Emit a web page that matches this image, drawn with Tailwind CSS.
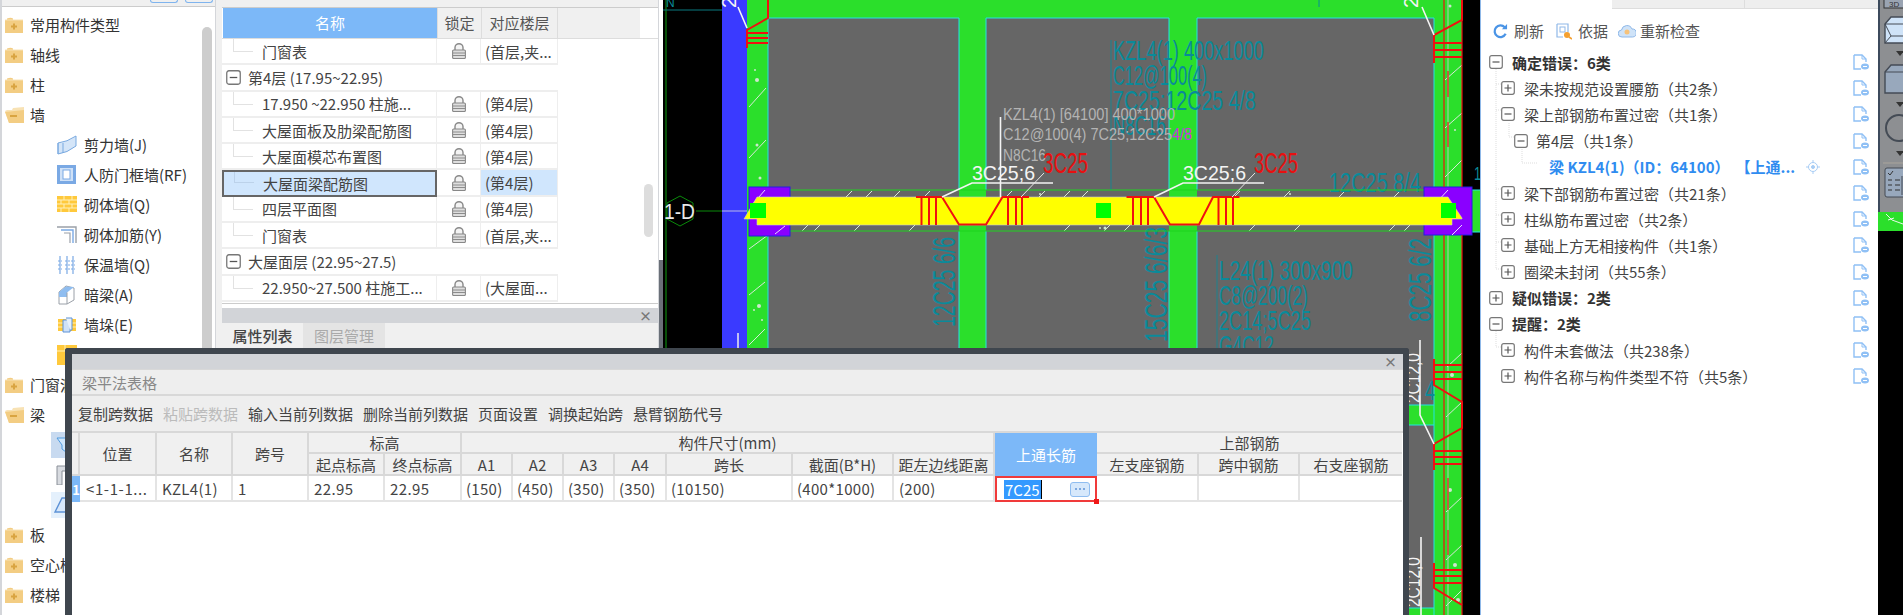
<!DOCTYPE html>
<html lang="zh-CN">
<head>
<meta charset="UTF-8">
<title>梁平法表格</title>
<script src="https://cdn.jsdelivr.net/npm/@tailwindcss/browser@4"></script>
</head>
<body class="bg-black overflow-hidden font-['Noto_Sans_CJK_SC','Noto_Sans',sans-serif] text-[15px] text-[#444]">

<svg class="hidden">
  <defs>
    <symbol id="folder-plus" viewBox="0 0 18 16">
      <path d="M0 3 L2 3 L2 1.5 Q6 0 8 1.5 L8 3 L18 3 L18 16 L0 16Z" fill="#f3cd83"/>
      <path d="M0 3 H18" stroke="#f8e2b4" stroke-width="1"/>
      <path d="M6 9.5H12M9 6.5V12.5" stroke="#d9a441" stroke-width="2"/>
    </symbol>
    <symbol id="folder-minus" viewBox="0 0 20 16">
      <path d="M2 3 L7 3 L8 1 L19 0 L19 16 L4 16 L0 4Z" fill="#f8e2b4"/>
      <path d="M0 5 L19 3 L19 16 L4 16Z" fill="#f3cd83"/>
      <path d="M5 9H12" stroke="#d9a441" stroke-width="2"/>
    </symbol>
    <symbol id="lock" viewBox="0 0 14 16">
      <path d="M3 7V4.500a4 3.800 0 0 1 8 0V7" fill="#f4f4f4" stroke="#888" stroke-width="1.4"/>
      <rect x="0.600" y="7" width="12.800" height="8.500" rx="1" fill="#dedede" stroke="#888" stroke-width="1.100"/>
      <path d="M1 10H13M1 12.500H13" stroke="#8c8c8c" stroke-width="1.100"/>
    </symbol>
    <symbol id="box-plus" viewBox="0 0 14 14">
      <rect x="0.7" y="0.7" width="12.6" height="12.6" rx="2" fill="#fff" stroke="#777" stroke-width="1.2"/>
      <path d="M3.5 7H10.5M7 3.5V10.5" stroke="#555" stroke-width="1.2"/>
    </symbol>
    <symbol id="box-minus" viewBox="0 0 14 14">
      <rect x="0.7" y="0.7" width="12.6" height="12.6" rx="2" fill="#fff" stroke="#777" stroke-width="1.2"/>
      <path d="M3.5 7H10.5" stroke="#555" stroke-width="1.2"/>
    </symbol>
    <symbol id="doc" viewBox="0 0 16 16">
      <path d="M1 1H9L13 5V8M1 1V15H8" fill="none" stroke="#8fc0f5" stroke-width="1.4"/>
      <path d="M9 1V5H13" fill="none" stroke="#8fc0f5" stroke-width="1"/>
      <ellipse cx="12" cy="12.5" rx="4" ry="3" fill="#8fc0f5"/>
      <path d="M10 12.5H14" stroke="#fff"/>
    </symbol>
  </defs>
</svg>

<div class="relative flex w-[1903px] h-[615px] overflow-hidden">

  <!-- 左侧构件树 -->
  <aside class="relative w-[216px] shrink-0 bg-white border-l-2 border-r border-[#d4d6da]">
    <div class="flex justify-end gap-[7px] h-[7px] pr-[2px] bg-[#f0f0f0] border-b border-[#ccc]">
      <span class="w-[28px] h-[3px] border-b border-x border-[#7fb4ee] rounded-b"></span>
      <span class="w-[28px] h-[3px] border-b border-x border-[#7fb4ee] rounded-b"></span>
    </div>
    <div class="flex flex-col pt-[3px] pl-[3px] text-[#333]">
      <div class="flex items-center h-[30px]"><svg class="w-[18px] h-[16px] mr-[7px]"><use href="#folder-plus"/></svg>常用构件类型</div>
      <div class="flex items-center h-[30px]"><svg class="w-[18px] h-[16px] mr-[7px]"><use href="#folder-plus"/></svg>轴线</div>
      <div class="flex items-center h-[30px]"><svg class="w-[18px] h-[16px] mr-[7px]"><use href="#folder-plus"/></svg>柱</div>
      <div class="flex items-center h-[30px]"><svg class="w-[20px] h-[16px] mr-[5px]"><use href="#folder-minus"/></svg>墙</div>
      <div class="flex items-center h-[30px] pl-[52px] gap-[7px]">
        <svg class="w-[20px] h-[20px]" viewBox="0 0 20 20"><path d="M1 8Q10 7 19 1V11Q10 18 1 19Z" fill="#d4e5f8" stroke="#79a9e0"/><path d="M1 8V19M6 8V18" stroke="#79a9e0"/></svg>剪力墙(J)</div>
      <div class="flex items-center h-[30px] pl-[52px] gap-[7px]">
        <svg class="w-[20px] h-[20px]" viewBox="0 0 20 20"><rect x="0" y="0" width="19" height="19" fill="#7aa9e4"/><rect x="3" y="3" width="13" height="13" fill="#cfe1f7"/><rect x="6" y="5" width="7" height="9" fill="#fff" stroke="#7aa9e4"/></svg>人防门框墙(RF)</div>
      <div class="flex items-center h-[30px] pl-[52px] gap-[7px]">
        <svg class="w-[20px] h-[20px]" viewBox="0 0 20 20"><rect y="1" width="20" height="16" fill="#ffc93c"/><path d="M0 5H20M0 9H20M0 13H20M7 1V5M15 1V5M4 5V9M12 5V9M7 9V13M15 9V13M4 13V17M12 13V17" stroke="#fff0b8"/></svg>砌体墙(Q)</div>
      <div class="flex items-center h-[30px] pl-[52px] gap-[7px]">
        <svg class="w-[20px] h-[20px]" viewBox="0 0 20 20" fill="none"><path d="M0 2H19V18" stroke="#9aa0a8" stroke-width="1.4"/><path d="M4 5H16V18" stroke="#7aa9e4" stroke-width="1.4"/><path d="M7 8H13V18" stroke="#9aa0a8" stroke-width="1.2"/></svg>砌体加筋(Y)</div>
      <div class="flex items-center h-[30px] pl-[52px] gap-[7px]">
        <svg class="w-[20px] h-[20px]" viewBox="0 0 20 20" fill="none" stroke="#7aa9e4"><path d="M3 1V19M10 1V19M16 1V19" stroke-width="1.2"/><path d="M1 6H5M8 6H18M1 10H5M8 10H18M1 14H5M8 14H18" stroke-dasharray="2 1"/></svg>保温墙(Q)</div>
      <div class="flex items-center h-[30px] pl-[52px] gap-[7px]">
        <svg class="w-[20px] h-[20px]" viewBox="0 0 20 20"><path d="M2 7V19H10L17 15V3L9 1Z" fill="#fff" stroke="#9aa0a8"/><path d="M2 7L9 1.5L17 2L10 7.5V12H2Z" fill="#8fbdf0"/><path d="M10 7.5V19" stroke="#9aa0a8"/></svg>暗梁(A)</div>
      <div class="flex items-center h-[30px] pl-[52px] gap-[7px]">
        <svg class="w-[20px] h-[20px]" viewBox="0 0 20 20"><rect x="1" y="4" width="18" height="12" fill="#ffc93c"/><path d="M1 8H19M1 12H19" stroke="#fff0b8"/><path d="M6 5H13V17H6Z" fill="#cfe1f7" stroke="#5d92d6"/><path d="M9 3H15V15H13" fill="#e6f0fb" stroke="#5d92d6"/></svg>墙垛(E)</div>
      <div class="flex items-center h-[30px] pl-[52px] gap-[7px]">
        <svg class="w-[20px] h-[20px]" viewBox="0 0 20 20"><rect y="0" width="20" height="20" fill="#ffc93c"/><path d="M0 6H20M8 0V6" stroke="#fff0b8"/></svg>墙</div>
      <div class="flex items-center h-[30px]"><svg class="w-[18px] h-[16px] mr-[7px]"><use href="#folder-plus"/></svg>门窗洞</div>
      <div class="flex items-center h-[30px]"><svg class="w-[20px] h-[16px] mr-[5px]"><use href="#folder-minus"/></svg>梁</div>
      <div class="flex items-center h-[30px] pl-[46px]"><span class="flex items-center justify-center w-[26px] h-[26px] bg-[#c8daf0]"><svg class="w-[16px] h-[16px]" viewBox="0 0 16 16"><path d="M1 1H15L10 8V15L6 12V8Z" fill="#cfe6fb" stroke="#4f9be0"/></svg></span></div>
      <div class="flex items-center h-[30px] pl-[46px]"><span class="flex items-center justify-center w-[26px] h-[26px]"><svg class="w-[16px] h-[20px]" viewBox="0 0 16 20"><path d="M1 20V1H16V6H6V20Z" fill="#d8dbe0" stroke="#8a9098"/></svg></span></div>
      <div class="flex items-center h-[30px] pl-[46px]"><span class="flex items-center justify-center w-[26px] h-[26px] bg-[#e4f0fc]"><svg class="w-[20px] h-[16px]" viewBox="0 0 20 16"><path d="M1 15L8 1H18L18 15Z" fill="#d8e8fa" stroke="#5d92d6" stroke-width="1.4"/></svg></span></div>
      <div class="flex items-center h-[30px]"><svg class="w-[18px] h-[16px] mr-[7px]"><use href="#folder-plus"/></svg>板</div>
      <div class="flex items-center h-[30px]"><svg class="w-[18px] h-[16px] mr-[7px]"><use href="#folder-plus"/></svg>空心楼盖</div>
      <div class="flex items-center h-[30px]"><svg class="w-[18px] h-[16px] mr-[7px]"><use href="#folder-plus"/></svg>楼梯</div>
    </div>
    <span class="absolute left-[200px] top-[27px] w-[10px] h-[340px] rounded-full bg-[#cdcdcd]"></span>
  </aside>
  <div class="w-[6px] shrink-0 bg-[#f0f0f0]"></div>

  <!-- 图纸列表 -->
  <section class="relative w-[437px] shrink-0 flex flex-col bg-white border-r border-[#d4d6da]">
    <div class="h-[8px] bg-[#f0f0f0] border-b border-[#ccc]"></div>
    <div class="flex h-[31px] text-[#555] border-b border-[#ddd]">
      <div class="w-[214px] ml-[1px] flex items-center justify-center bg-[#7cb8f8] text-white">名称</div>
      <div class="w-[44px] flex items-center justify-center bg-[#f0f0f0] border-l border-[#ddd]">锁定</div>
      <div class="w-[77px] flex items-center justify-center bg-[#f0f0f0] border-x border-[#ddd]">对应楼层</div>
      <div class="w-[82px] bg-[#f0f0f0]"></div>
    </div>
    <div class="grid grid-cols-[215px_44px_77px] auto-rows-[26.3px] w-[337px] leading-none">
      <div class="relative flex items-center pl-[40px] border-b-2 border-r border-[#eee]"><span class="absolute left-[11px] top-0 h-[13px] w-[20px] border-l border-b border-[#e2e2e2]"></span>门窗表</div>
      <div class="flex items-center justify-center border-b-2 border-r border-[#eee]"><svg class="w-[14px] h-[16px]"><use href="#lock"/></svg></div>
      <div class="flex items-center pl-[4px] border-b-2 border-r border-[#eee]">(首层,夹...</div>

      <div class="col-span-3 flex items-center pl-[4px] gap-[7px] border-b-2 border-[#eee]"><svg class="w-[15px] h-[15px]"><use href="#box-minus"/></svg>第4层 (17.95~22.95)</div>

      <div class="relative flex items-center pl-[40px] border-b-2 border-r border-[#eee]"><span class="absolute left-[11px] top-0 h-[13px] w-[20px] border-l border-b border-[#e2e2e2]"></span>17.950 ~22.950 柱施...</div>
      <div class="flex items-center justify-center border-b-2 border-r border-[#eee]"><svg class="w-[14px] h-[16px]"><use href="#lock"/></svg></div>
      <div class="flex items-center pl-[4px] border-b-2 border-r border-[#eee]">(第4层)</div>

      <div class="relative flex items-center pl-[40px] border-b-2 border-r border-[#eee]"><span class="absolute left-[11px] top-0 h-[13px] w-[20px] border-l border-b border-[#e2e2e2]"></span>大屋面板及肋梁配筋图</div>
      <div class="flex items-center justify-center border-b-2 border-r border-[#eee]"><svg class="w-[14px] h-[16px]"><use href="#lock"/></svg></div>
      <div class="flex items-center pl-[4px] border-b-2 border-r border-[#eee]">(第4层)</div>

      <div class="relative flex items-center pl-[40px] border-b-2 border-r border-[#eee]"><span class="absolute left-[11px] top-0 h-[13px] w-[20px] border-l border-b border-[#e2e2e2]"></span>大屋面模芯布置图</div>
      <div class="flex items-center justify-center border-b-2 border-r border-[#eee]"><svg class="w-[14px] h-[16px]"><use href="#lock"/></svg></div>
      <div class="flex items-center pl-[4px] border-b-2 border-r border-[#eee]">(第4层)</div>

      <div class="relative flex items-center pl-[39px] bg-[#d0e6fd] border-2 border-[#666]"><span class="absolute left-[10px] top-0 h-[11px] w-[20px] border-l border-b border-[#bcd2ea]"></span>大屋面梁配筋图</div>
      <div class="flex items-center justify-center border-b-2 border-r border-[#eee]"><svg class="w-[14px] h-[16px]"><use href="#lock"/></svg></div>
      <div class="flex items-center pl-[4px] bg-[#d0e6fd] border-b-2 border-r border-[#eee]">(第4层)</div>

      <div class="relative flex items-center pl-[40px] border-b-2 border-r border-[#eee]"><span class="absolute left-[11px] top-0 h-[13px] w-[20px] border-l border-b border-[#e2e2e2]"></span>四层平面图</div>
      <div class="flex items-center justify-center border-b-2 border-r border-[#eee]"><svg class="w-[14px] h-[16px]"><use href="#lock"/></svg></div>
      <div class="flex items-center pl-[4px] border-b-2 border-r border-[#eee]">(第4层)</div>

      <div class="relative flex items-center pl-[40px] border-b-2 border-r border-[#eee]"><span class="absolute left-[11px] top-0 h-[13px] w-[20px] border-l border-b border-[#e2e2e2]"></span>门窗表</div>
      <div class="flex items-center justify-center border-b-2 border-r border-[#eee]"><svg class="w-[14px] h-[16px]"><use href="#lock"/></svg></div>
      <div class="flex items-center pl-[4px] border-b-2 border-r border-[#eee]">(首层,夹...</div>

      <div class="col-span-3 flex items-center pl-[4px] gap-[7px] border-b-2 border-[#eee]"><svg class="w-[15px] h-[15px]"><use href="#box-minus"/></svg>大屋面层 (22.95~27.5)</div>

      <div class="relative flex items-center pl-[40px] border-b-2 border-r border-[#eee]"><span class="absolute left-[11px] top-0 h-[13px] w-[20px] border-l border-b border-[#e2e2e2]"></span>22.950~27.500 柱施工...</div>
      <div class="flex items-center justify-center border-b-2 border-r border-[#eee]"><svg class="w-[14px] h-[16px]"><use href="#lock"/></svg></div>
      <div class="flex items-center pl-[4px] border-b-2 border-r border-[#eee]">(大屋面...</div>
    </div>
    <div class="mt-[1px] h-[5px] border-t border-[#ccc] bg-white"></div>
    <div class="flex items-center justify-end pr-[6px] h-[15px] bg-[#d2d4d8] text-[#777] text-[13px] leading-none font-bold">×</div>
    <div class="flex h-[25px] bg-[#f0f0f0] leading-none">
      <div class="w-[81px] flex items-center justify-center font-medium">属性列表</div>
      <div class="w-[82px] flex items-center justify-center bg-[#e4e4e4] text-[#aaa]">图层管理</div>
    </div>
    <span class="absolute left-[422px] top-[184px] w-[9px] h-[53px] rounded-full bg-[#ddd]"></span>
  </section>

  <!-- 分隔条 -->
  <div class="w-[4px] shrink-0 flex flex-col">
    <div class="h-[260px] bg-white"></div>
    <div class="flex-1 bg-[#6a7078]"></div>
  </div>

  <!-- CAD 绘图区 -->
  <svg class="w-[817px] h-[615px] shrink-0 bg-black font-['Liberation_Sans',sans-serif]" viewBox="663 0 817 615">
    <path d="M666 0V615" stroke="#0a6a0a" stroke-width="1.5"/>
    <path d="M663 10H760" stroke="#0a7a80"/>
    <text x="666" y="7" font-size="12" fill="#0a8a9a">N</text>
    <rect x="722" y="0" width="25" height="615" fill="#3a3aff"/>
    <rect x="747" y="0" width="715" height="615" fill="#2bdf2b"/>
    <rect x="768" y="18" width="666" height="597" fill="#666"/>
    <rect x="959" y="0" width="27" height="615" fill="#2bdf2b"/>
    <rect x="1169" y="0" width="28" height="615" fill="#2bdf2b"/>
    <rect x="1197" y="405" width="237" height="20" fill="#2bdf2b"/>
    <rect x="1197" y="608" width="237" height="7" fill="#2bdf2b"/>
    <path d="M768 18H959V190M986 190V18H1169V190M1197 190V18H1434V615M768 18V615M959 231V615M986 231V615M1169 231V615M1197 231V405M1197 405H1434M1197 425H1434M1197 608H1434" fill="none" stroke="#22e4e4" stroke-width="1"/>
    <rect x="1462" y="0" width="18" height="615" fill="#000"/>
    <path d="M1462 211H1480" stroke="#aaa"/>
    <rect x="1472" y="190" width="8" height="42" fill="#2bdf2b"/>
    <path d="M1472 190H1480M1472 232H1480" stroke="#22e4e4"/>
    <path d="M738 333V348" stroke="#eee" stroke-width="1.5"/>

    <!-- 填充斜线 -->
    <g stroke="#d8e8d8" stroke-width="1" fill="none">
      <path d="M766 88L749 107M766 140L749 158M768 235L749 249M765 282L749 295M765 329L749 345"/>
      <path d="M1462 65L1445 80M1462 113L1445 128M1462 160L1445 177M1462 353L1447 367M1462 402L1446 417M1462 497L1446 512M1462 545L1446 560M1462 590L1446 606"/>
      <path d="M1448 0V187M1448 235V615" stroke="#b8c8b8"/>
      <path d="M852 191L846 197M872 191L866 197M900 191L894 197M930 191L924 197M1012 191L1006 197M1045 191L1039 197M1070 191L1064 197M1088 191L1082 197M1240 191L1234 197M1290 191L1284 197M1345 191L1339 197M1400 191L1394 197"/>
      <path d="M808 225L802 231M820 225L814 231M860 225L854 231M915 225L909 231M1070 225L1064 231M1110 225L1104 231M1130 225L1124 231M1255 225L1249 231M1300 225L1294 231M1395 225L1389 231M1410 225L1404 231"/>
    </g>
    <g fill="#cfe6cf">
      <circle cx="755" cy="70" r="1"/><circle cx="757" cy="80" r="2"/><circle cx="757" cy="145" r="1.5"/><circle cx="760" cy="178" r="1.5"/><circle cx="754" cy="310" r="1"/><circle cx="759" cy="306" r="2"/><circle cx="762" cy="320" r="1"/>
      <circle cx="1450" cy="6" r="1.5"/><circle cx="1455" cy="130" r="1"/><circle cx="1452" cy="375" r="2"/><circle cx="1450" cy="490" r="2"/><circle cx="1455" cy="565" r="2"/><circle cx="1458" cy="600" r="2"/>
      <circle cx="1040" cy="194" r="1"/><circle cx="1290" cy="194" r="1"/><circle cx="1105" cy="228" r="1.5"/><circle cx="1100" cy="228" r="1"/>
    </g>

    <!-- 标注 -->
    <g fill="#0a8a9a" font-size="28">
      <path d="M1111 40V190M1217 255V350" stroke="#0a8a9a" fill="none" stroke-width="0.8"/>
      <path d="M1319 0V7" stroke="#0a8a9a" stroke-width="1"/>
      <text x="1113" y="60" textLength="151" lengthAdjust="spacingAndGlyphs">KZL4(1) 400x1000</text>
      <text x="1113" y="85" textLength="94" lengthAdjust="spacingAndGlyphs">C12@100(4)</text>
      <text x="1113" y="110" textLength="143" lengthAdjust="spacingAndGlyphs">7C25;12C25 4/8</text>
      <text x="1113" y="135" textLength="53" lengthAdjust="spacingAndGlyphs">N8C16</text>
      <text x="1329" y="192" textLength="92" lengthAdjust="spacingAndGlyphs">12C25 8/4</text>
      <text x="1219" y="280" textLength="134" lengthAdjust="spacingAndGlyphs">L24(1) 300x900</text>
      <text x="1219" y="305" textLength="89" lengthAdjust="spacingAndGlyphs">C8@200(2)</text>
      <text x="1219" y="330" textLength="92" lengthAdjust="spacingAndGlyphs">2C14;5C25</text>
      <text x="1219" y="355" textLength="55" lengthAdjust="spacingAndGlyphs">G4C12</text>
      <text x="1425" y="400" textLength="10" lengthAdjust="spacingAndGlyphs">4</text>
      <text transform="translate(955 327) rotate(-90)" font-size="31" textLength="90" lengthAdjust="spacingAndGlyphs">12C25 6/6</text>
      <text transform="translate(1167 342) rotate(-90)" font-size="31" textLength="115" lengthAdjust="spacingAndGlyphs">15C25 6/6/3</text>
      <text transform="translate(1431 322) rotate(-90)" font-size="31" textLength="84" lengthAdjust="spacingAndGlyphs">8C25 6/2</text>
      <text x="1474" y="180" font-size="18" textLength="7" lengthAdjust="spacingAndGlyphs">1</text>
    </g>

    <!-- 梁 -->
    <path d="M790 190H1425M790 231H1425" stroke="#1fd41f" stroke-width="1.2" fill="none"/>
    <rect x="749" y="187" width="41" height="49" fill="#8a00ff" stroke="#2020e0" stroke-width="1"/>
    <rect x="1424" y="187" width="48" height="48" fill="#8a00ff" stroke="#2020e0" stroke-width="1"/>
    <path d="M765 190L752 205M785 226L775 234M1448 190L1436 203M1462 225L1452 235" stroke="#e8d8ff"/>
    <path d="M757 197H1448L1462 218V219H1452V225H757V219H744Z" fill="#ff0" stroke="#cfcfcf" stroke-width="0.6"/>
    <rect x="750" y="203" width="16" height="15" fill="#0f0"/>
    <rect x="1096" y="203" width="15" height="15" fill="#0f0"/>
    <rect x="1441" y="203" width="15" height="15" fill="#0f0"/>

    <!-- 钢筋 -->
    <g fill="none" stroke="#f01010" stroke-width="2">
      <path d="M916 197H942L959 224.500H986L1002.500 197H1029"/>
      <path d="M921.500 197V225M929 197V225M936 197V225M1008 197V225M1016 197V225M1022 197V225"/>
      <path d="M1126.500 197H1154L1170 224.500H1199L1213 197H1239.500"/>
      <path d="M1133 197V225M1141 197V225M1148 197V225M1218.500 197V225M1226 197V225M1233 197V225"/>
      <path d="M768 0V18L747 30V48M747 33H768M747 38H768M747 43H768"/>
      <path d="M1462 0V20L1434 35V63M1434 43H1462M1434 50H1462M1434 57H1462"/>
      <path d="M1434 359V385L1462 402V428L1434 444V470M1434 365H1462M1434 372H1462M1434 379H1462M1434 451H1462M1434 457H1462M1434 464H1462"/>
      <path d="M1434 563V588L1462 605M1434 570H1462M1434 576H1462M1434 583H1462"/>
    </g>
    <path d="M1462 0V187M1462 235V615M1444 0V187M1444 235V615" fill="none" stroke="#f01010" stroke-width="1.2"/>
    <path d="M1448 71V97M1448 122V147M1448 478V510M1448 530V555" stroke="#e03030" stroke-width="1.4"/>

    <!-- 引线 -->
    <g fill="none" stroke="#f4f4f4" stroke-width="1.6">
      <path d="M942 197L972 183H1053"/>
      <path d="M1154 197L1183 183H1264"/>
      <path d="M1000.500 117V197"/>
      <path d="M738 7L747 28M1422 7L1434 35M1420 340V415L1434 444M1421 537V615"/>
    </g>
    <path d="M1044 173L1021 197M1255 173L1232 197" stroke="#e8e8e8"/>

    <!-- 轴号 -->
    <polygon points="680,196 693,203 693,219 680,226 667,219 667,203" fill="none" stroke="#0a8a0a"/>
    <path d="M696 211H722" stroke="#0a8a0a"/>
    <path d="M722 211H747" stroke="#b8b8e8"/>
    <text x="664" y="219" font-size="22" fill="#e8e8e8" textLength="31" lengthAdjust="spacingAndGlyphs">1-D</text>

    <g fill="#b4b4b4" font-size="16">
      <text x="1003" y="120" textLength="172" lengthAdjust="spacingAndGlyphs">KZL4(1) [64100] 400*1000</text>
      <text x="1003" y="140" textLength="169" lengthAdjust="spacingAndGlyphs">C12@100(4) 7C25;12C25</text>
      <text x="1172" y="140" fill="#d030e0" textLength="20" lengthAdjust="spacingAndGlyphs">4/8</text>
      <text x="1003" y="161" textLength="43" lengthAdjust="spacingAndGlyphs">N8C16</text>
    </g>
    <g fill="#f4f4f4" font-size="21">
      <text x="972" y="180" textLength="63" lengthAdjust="spacingAndGlyphs">3C25;6</text>
      <text x="1183" y="180" textLength="63" lengthAdjust="spacingAndGlyphs">3C25;6</text>
      <text transform="translate(736 8) rotate(-90)" font-size="20">2</text>
      <text transform="translate(1418 8) rotate(-90)" font-size="20">2</text>
      <text transform="translate(1420 403) rotate(-90)" font-size="20" textLength="50" lengthAdjust="spacingAndGlyphs">2C12,0</text>
      <text transform="translate(1420 607) rotate(-90)" font-size="20" textLength="50" lengthAdjust="spacingAndGlyphs">2C12,0</text>
    </g>
    <g fill="#e81010" font-size="30">
      <text x="1043" y="173" textLength="45" lengthAdjust="spacingAndGlyphs">3C25</text>
      <text x="1254" y="173" textLength="44" lengthAdjust="spacingAndGlyphs">3C25</text>
    </g>
  </svg>

  <!-- 合法性检查结果 -->
  <section class="relative w-[398px] shrink-0 bg-white border-l border-[#8fb8e8] flex flex-col">
    <div class="flex h-[9px] bg-white border-[#ddd]">
      <div class="w-[131px]"></div>
      <div class="w-[133px] bg-[#eee] border-b border-r border-[#ddd]"></div>
      <div class="flex-1 bg-[#eee] border-b border-[#ddd]"></div>
    </div>
    <div class="flex items-center h-[40px] pl-[12px] pt-[4px] text-[#555]">
      <svg class="w-[15px] h-[15px] mr-[6px]" viewBox="0 0 16 16" fill="none"><path d="M13.500 10.500A6.200 6.200 0 1 1 12.500 3.500" stroke="#4a94e6" stroke-width="2.4"/><path d="M9.500 5.500H15V0Z" fill="#4a94e6"/></svg>
      <span>刷新</span>
      <svg class="w-[16px] h-[17px] ml-[12px] mr-[6px]" viewBox="0 0 16 17" fill="none"><path d="M1 1H12V9M1 1V14H7" stroke="#8fb8e8" stroke-width="1.2"/><rect x="4" y="4" width="5" height="5" stroke="#8fb8e8"/><circle cx="11" cy="12" r="3" fill="#f5a030"/><path d="M13 14L16 16" stroke="#f5a030" stroke-width="1.6"/></svg>
      <span>依据</span>
      <svg class="w-[18px] h-[14px] ml-[10px] mr-[4px]" viewBox="0 0 18 14"><path d="M4 13A3.500 3.500 0 0 1 3.500 6A5.500 5.500 0 0 1 14 5A4 4 0 0 1 14.500 13Z" fill="#cfe3f8" stroke="#8fb8e8"/><circle cx="9" cy="8" r="2.500" fill="#f6c27a"/></svg>
      <span>重新检查</span>
    </div>
    <div class="relative flex flex-col leading-none pr-[9px]">
      <svg class="absolute left-0 top-0 w-[60px] h-[340px]" fill="none" stroke="#ddd" stroke-dasharray="1 1"><path d="M15 20V220H20M15 35H20M15 61H20M15 140H20M15 166H20M15 193H20M15 298H20M15 272V298M28 74V88H33M41 100V114H56"/></svg>
      <div class="relative flex items-center h-[26.2px] pl-[8px]"><svg class="w-[14px] h-[14px] mr-[9px]"><use href="#box-minus"/></svg><b class="font-bold text-[#333]">确定错误：6类</b><svg class="ml-auto w-[16px] h-[16px]"><use href="#doc"/></svg></div>
      <div class="relative flex items-center h-[26.2px] pl-[20px]"><svg class="w-[14px] h-[14px] mr-[9px]"><use href="#box-plus"/></svg>梁未按规范设置腰筋（共2条）<svg class="ml-auto w-[16px] h-[16px]"><use href="#doc"/></svg></div>
      <div class="relative flex items-center h-[26.2px] pl-[20px]"><svg class="w-[14px] h-[14px] mr-[9px]"><use href="#box-minus"/></svg>梁上部钢筋布置过密（共1条）<svg class="ml-auto w-[16px] h-[16px]"><use href="#doc"/></svg></div>
      <div class="relative flex items-center h-[26.2px] pl-[33px]"><svg class="w-[14px] h-[14px] mr-[8px]"><use href="#box-minus"/></svg>第4层（共1条）<svg class="ml-auto w-[16px] h-[16px]"><use href="#doc"/></svg></div>
      <div class="relative flex items-center h-[26.2px] pl-[68px] text-[#2f8cf0] font-bold">梁 KZL4(1)（ID：64100）<span class="ml-[6px]">【上通...</span><svg class="ml-auto mr-[33px] w-[14px] h-[14px]" viewBox="0 0 14 14" fill="none" stroke="#a8cdf5"><circle cx="7" cy="7" r="4.500"/><circle cx="7" cy="7" r="1.500" fill="#a8cdf5"/><path d="M7 0V2.500M7 11.500V14M0 7H2.500M11.500 7H14"/></svg><svg class="w-[16px] h-[16px]"><use href="#doc"/></svg></div>
      <div class="relative flex items-center h-[26.2px] pl-[20px]"><svg class="w-[14px] h-[14px] mr-[9px]"><use href="#box-plus"/></svg>梁下部钢筋布置过密（共21条）<svg class="ml-auto w-[16px] h-[16px]"><use href="#doc"/></svg></div>
      <div class="relative flex items-center h-[26.2px] pl-[20px]"><svg class="w-[14px] h-[14px] mr-[9px]"><use href="#box-plus"/></svg>柱纵筋布置过密（共2条）<svg class="ml-auto w-[16px] h-[16px]"><use href="#doc"/></svg></div>
      <div class="relative flex items-center h-[26.2px] pl-[20px]"><svg class="w-[14px] h-[14px] mr-[9px]"><use href="#box-plus"/></svg>基础上方无相接构件（共1条）<svg class="ml-auto w-[16px] h-[16px]"><use href="#doc"/></svg></div>
      <div class="relative flex items-center h-[26.2px] pl-[20px]"><svg class="w-[14px] h-[14px] mr-[9px]"><use href="#box-plus"/></svg>圈梁未封闭（共55条）<svg class="ml-auto w-[16px] h-[16px]"><use href="#doc"/></svg></div>
      <div class="relative flex items-center h-[26.2px] pl-[8px]"><svg class="w-[14px] h-[14px] mr-[9px]"><use href="#box-plus"/></svg><b class="font-bold text-[#333]">疑似错误：2类</b><svg class="ml-auto w-[16px] h-[16px]"><use href="#doc"/></svg></div>
      <div class="relative flex items-center h-[26.2px] pl-[8px]"><svg class="w-[14px] h-[14px] mr-[9px]"><use href="#box-minus"/></svg><b class="font-bold text-[#333]">提醒：2类</b><svg class="ml-auto w-[16px] h-[16px]"><use href="#doc"/></svg></div>
      <div class="relative flex items-center h-[26.2px] pl-[20px]"><svg class="w-[14px] h-[14px] mr-[9px]"><use href="#box-plus"/></svg>构件未套做法（共238条）<svg class="ml-auto w-[16px] h-[16px]"><use href="#doc"/></svg></div>
      <div class="relative flex items-center h-[26.2px] pl-[20px]"><svg class="w-[14px] h-[14px] mr-[9px]"><use href="#box-plus"/></svg>构件名称与构件类型不符（共5条）<svg class="ml-auto w-[16px] h-[16px]"><use href="#doc"/></svg></div>
    </div>
  </section>

  <!-- 右侧工具条 -->
  <div class="flex flex-col w-[25px] shrink-0">
    <div class="h-[212px] bg-[#8d8f92] border-l-2 border-[#3c4a5c] overflow-hidden">
      <svg class="w-[23px] h-[212px]" viewBox="0 0 23 212">
        <rect x="4" y="-4" width="24" height="12" fill="#9aa4b2" stroke="#333"/>
        <text x="9" y="7" font-size="8" fill="#333" font-family="Liberation Sans">3D</text>
        <path d="M5 24L11 17H30V43H5Z" fill="#cfe3f8" stroke="#444b55" stroke-width="1.4"/>
        <path d="M5 24H30M5 24L11 36H30M5 43L11 36" fill="none" stroke="#444b55"/>
        <path d="M16 51H24L20 56Z" fill="#333"/>
        <path d="M5 72L11 65H30V93H5Z" fill="#98a8bc" stroke="#444b55" stroke-width="1.4"/>
        <path d="M5 72H30" stroke="#444b55"/>
        <path d="M16 102H24L20 107Z" fill="#333"/>
        <circle cx="19" cy="128" r="13" fill="none" stroke="#444b55" stroke-width="2"/>
        <path d="M16 151H24L20 156Z" fill="#333"/>
        <path d="M3 163H23" stroke="#aaa59c"/>
        <rect x="5" y="168" width="26" height="29" rx="2" fill="#98a8bc" stroke="#444b55"/>
        <path d="M8 173L10 175L13 171M8 180H12M8 185H12M8 190H12M15 180H20M15 185H20M15 190H20" fill="none" stroke="#333"/>
        <path d="M22 176V195" stroke="#444b55"/>
      </svg>
    </div>
    <svg class="w-[25px] h-[403px] bg-black" viewBox="0 0 25 403"><rect width="25" height="19" fill="#2bdf2b"/><path d="M8 2L14 8L25 12M10 8L16 6" stroke="#e8f8e8" fill="none"/></svg>
  </div>

  <!-- 梁平法表格 浮动窗口 -->
  <div class="absolute left-[65px] top-[348px] w-[1344px] h-[267px] flex flex-col bg-white border-l-[7px] border-r-[6px] border-t-[6px] border-[#3f464e] rounded-t-[3px] leading-none">
    <div class="flex items-center justify-end pr-[6px] h-[15px] bg-[#d2d4d8] text-[#777] text-[13px] font-bold">×</div>
    <div class="flex items-center h-[27px] pl-[10px] bg-[#eee] text-[#888] border-b-2 border-t border-[#d8d8d8]">梁平法表格</div>
    <div class="flex items-center gap-[10px] h-[35px] pl-[6px] bg-[#eee] text-[#444]">
      <span>复制跨数据</span><span class="text-[#bbb]">粘贴跨数据</span><span>输入当前列数据</span><span>删除当前列数据</span><span>页面设置</span><span>调换起始跨</span><span>悬臂钢筋代号</span>
    </div>
    <div class="relative grid grid-cols-[8px_77px_76px_76px_76px_77px_51px_51px_51px_52px_126px_101px_101px_102px_102px_101px_102px] grid-rows-[21px_22px_26px] border-t-2 border-[#d8d8d8] text-[#444]">
      <div class="row-span-2 bg-[#f0f0f0] border-r-2 border-b-2 border-[#d8d8d8]"></div>
      <div class="row-span-2 flex items-center justify-center bg-[#f0f0f0] border-r-2 border-b-2 border-[#d8d8d8]">位置</div>
      <div class="row-span-2 flex items-center justify-center bg-[#f0f0f0] border-r-2 border-b-2 border-[#d8d8d8]">名称</div>
      <div class="row-span-2 flex items-center justify-center bg-[#f0f0f0] border-r-2 border-b-2 border-[#d8d8d8]">跨号</div>
      <div class="col-span-2 flex items-center justify-center bg-[#f0f0f0] border-r-2 border-b-2 border-[#d8d8d8]">标高</div>
      <div class="col-span-7 flex items-center justify-center bg-[#f0f0f0] border-r-2 border-b-2 border-[#d8d8d8]">构件尺寸(mm)</div>
      <div class="row-span-2 flex items-center justify-center bg-[#7cb8f8] text-white">上通长筋</div>
      <div class="col-span-3 flex items-center justify-center bg-[#f0f0f0] border-b-2 border-[#d8d8d8]">上部钢筋</div>

      <div class="flex items-center justify-center bg-[#f0f0f0] border-r-2 border-b-2 border-[#d8d8d8]">起点标高</div>
      <div class="flex items-center justify-center bg-[#f0f0f0] border-r-2 border-b-2 border-[#d8d8d8]">终点标高</div>
      <div class="flex items-center justify-center bg-[#f0f0f0] border-r-2 border-b-2 border-[#d8d8d8]">A1</div>
      <div class="flex items-center justify-center bg-[#f0f0f0] border-r-2 border-b-2 border-[#d8d8d8]">A2</div>
      <div class="flex items-center justify-center bg-[#f0f0f0] border-r-2 border-b-2 border-[#d8d8d8]">A3</div>
      <div class="flex items-center justify-center bg-[#f0f0f0] border-r-2 border-b-2 border-[#d8d8d8]">A4</div>
      <div class="flex items-center justify-center bg-[#f0f0f0] border-r-2 border-b-2 border-[#d8d8d8]">跨长</div>
      <div class="flex items-center justify-center bg-[#f0f0f0] border-r-2 border-b-2 border-[#d8d8d8]">截面(B*H)</div>
      <div class="flex items-center justify-center bg-[#f0f0f0] border-r-2 border-b-2 border-[#d8d8d8]">距左边线距离</div>
      <div class="flex items-center justify-center bg-[#f0f0f0] border-r-2 border-b-2 border-[#d8d8d8]">左支座钢筋</div>
      <div class="flex items-center justify-center bg-[#f0f0f0] border-r-2 border-b-2 border-[#d8d8d8]">跨中钢筋</div>
      <div class="flex items-center justify-center bg-[#f0f0f0] border-b-2 border-[#d8d8d8]">右支座钢筋</div>

      <div class="flex items-center justify-center bg-[#7cb8f8] text-white text-[13px] font-bold">1</div>
      <div class="flex items-center pl-[6px] tracking-[0.6px] border-r-2 border-b-2 border-[#e4e4e4]">&lt;1-1-1...</div>
      <div class="flex items-center pl-[5px] tracking-[0.3px] border-r-2 border-b-2 border-[#e4e4e4]">KZL4(1)</div>
      <div class="flex items-center pl-[5px] border-r-2 border-b-2 border-[#e4e4e4]">1</div>
      <div class="flex items-center pl-[5px] tracking-[0.4px] border-r-2 border-b-2 border-[#e4e4e4]">22.95</div>
      <div class="flex items-center pl-[5px] tracking-[0.4px] border-r-2 border-b-2 border-[#e4e4e4]">22.95</div>
      <div class="flex items-center pl-[4px] tracking-[0.3px] border-r-2 border-b-2 border-[#e4e4e4]">(150)</div>
      <div class="flex items-center pl-[4px] tracking-[0.3px] border-r-2 border-b-2 border-[#e4e4e4]">(450)</div>
      <div class="flex items-center pl-[4px] tracking-[0.3px] border-r-2 border-b-2 border-[#e4e4e4]">(350)</div>
      <div class="flex items-center pl-[4px] tracking-[0.3px] border-r-2 border-b-2 border-[#e4e4e4]">(350)</div>
      <div class="flex items-center pl-[4px] tracking-[0.3px] border-r-2 border-b-2 border-[#e4e4e4]">(10150)</div>
      <div class="flex items-center pl-[4px] tracking-[0.3px] border-r-2 border-b-2 border-[#e4e4e4]">(400*1000)</div>
      <div class="flex items-center pl-[5px] tracking-[0.3px] border-r-2 border-b-2 border-[#e4e4e4]">(200)</div>
      <div class="relative flex items-center pl-[7px] pr-[5px] border-2 border-[#f03a3a]">
        <span class="bg-[#3399ff] text-white px-px py-[2px] border-r border-black">7C25</span>
        <span class="ml-auto flex items-center justify-center w-[20px] h-[15px] bg-[#d6e8fb] border border-[#8fbdf0] rounded-[3px]"><svg class="w-[12px] h-[4px]" viewBox="0 0 12 4" fill="#5d92d6"><circle cx="2" cy="2" r="1"/><circle cx="6" cy="2" r="1"/><circle cx="10" cy="2" r="1"/></svg></span>
        <span class="absolute -right-[4px] -bottom-[4px] w-[5px] h-[5px] bg-[#f01818]"></span>
      </div>
      <div class="border-r-2 border-b-2 border-[#e4e4e4]"></div>
      <div class="border-r-2 border-b-2 border-[#e4e4e4]"></div>
      <div class="border-b-2 border-[#e4e4e4]"></div>
    </div>
  </div>
</div>
</body>
</html>
